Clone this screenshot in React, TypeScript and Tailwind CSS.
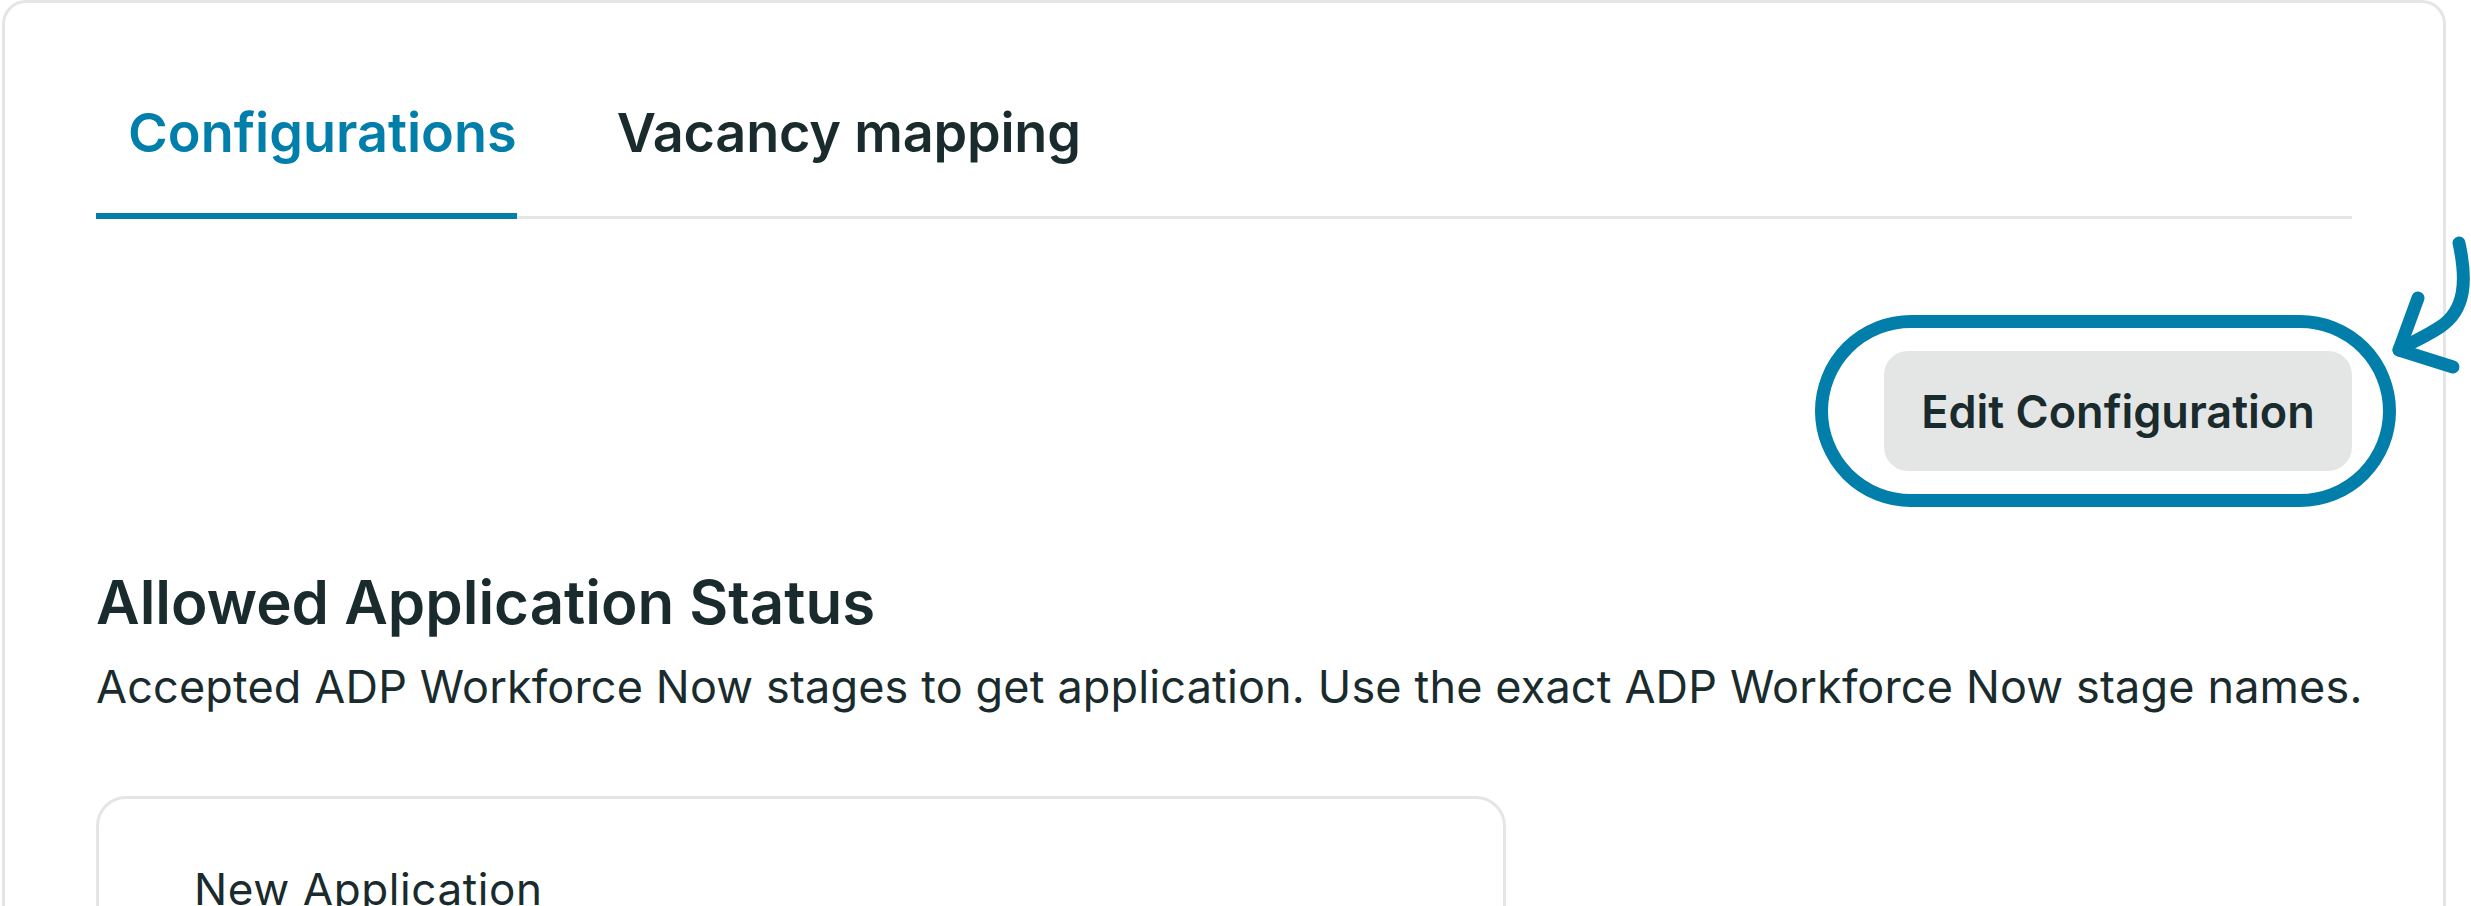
import React from "react";

const tabs = ["Configurations", "Vacancy mapping"];

const CurvedArrow: React.FC = () => (
  <svg
    className="absolute left-0 top-0 pointer-events-none"
    width="2471"
    height="906"
    viewBox="0 0 2471 906"
    fill="none"
  >
    <path
      d="M2459 243 C2467 280, 2466 310, 2440 327 C2425 337, 2410 343, 2399 350"
      stroke="#017eaa"
      strokeWidth="13"
      strokeLinecap="round"
      strokeLinejoin="round"
    />
    <path
      d="M2418 298 L2399 350 L2453 367"
      stroke="#017eaa"
      strokeWidth="13"
      strokeLinecap="round"
      strokeLinejoin="round"
    />
  </svg>
);

const App: React.FC = () => {
  return (
    <div className="relative w-[2471px] h-[906px] overflow-hidden bg-white font-[family-name:Inter,sans-serif] text-[#1a2b2e]">
      <div className="ml-[2px] w-[2444px] min-h-[1200px] border-[3px] border-[#e4e6e5] rounded-[24px] px-[91px] pt-[103px]">
        {/* tabs */}
        <div className="flex border-b-[3px] border-[#e4e6e5]">
          {tabs.map((tab, i) =>
            i === 0 ? (
              <div
                key={tab}
                className="pl-[32px] pb-[53px] -mb-[3px] border-b-[6px] border-[#017eaa] text-[54px] leading-[54px] font-semibold text-[#017eaa] whitespace-nowrap"
              >
                {tab}
              </div>
            ) : (
              <div
                key={tab}
                className="ml-[68px] pl-[32px] pb-[56px] text-[54px] leading-[54px] font-semibold tracking-[-0.2px] whitespace-nowrap"
              >
                {tab}
              </div>
            )
          )}
        </div>

        {/* edit button */}
        <div className="flex justify-end mt-[132px]">
          <div className="relative">
            <div className="absolute -left-[69px] -right-[44px] -top-[36px] -bottom-[36px] rounded-full border-[13px] border-[#017eaa]" />
            <button
              type="button"
              className="relative w-[468px] h-[120px] rounded-[24px] bg-[#e4e6e5] text-[45px] leading-[45px] font-semibold text-[#1a2b2e] whitespace-nowrap"
            >
              Edit Configuration
            </button>
          </div>
        </div>

        {/* allowed status */}
        <h2 className="mt-[101px] text-[60px] leading-[60px] font-semibold whitespace-nowrap">
          Allowed Application Status
        </h2>
        <p className="mt-[32px] text-[45px] leading-[45px] tracking-[0.15px] whitespace-nowrap">
          Accepted ADP Workforce Now stages to get application. Use the exact ADP Workforce Now stage names.
        </p>

        <div className="mt-[87px] w-[1410px] min-h-[300px] border-[3px] border-[#e4e6e5] rounded-[30px] pl-[95px] pt-[68px]">
          <div className="text-[44px] leading-[44px] tracking-[0.6px]">New Application</div>
        </div>
      </div>
      <CurvedArrow />
    </div>
  );
};

export default App;
